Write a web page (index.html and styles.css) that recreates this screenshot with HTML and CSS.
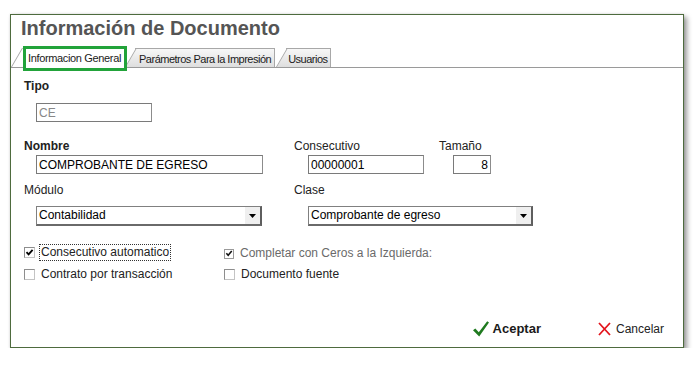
FILE: index.html
```html
<!DOCTYPE html>
<html lang="es">
<head>
<meta charset="utf-8">
<title>Información de Documento</title>
<link rel="stylesheet" href="styles.css">
</head>
<body>
<div class="window">
  <h1 class="title">Información de Documento</h1>
  <div class="tabs">
    <div class="tab active">Informacion General</div>
    <div class="tab t2">Parámetros Para la Impresión</div>
    <div class="tab t3">Usuarios</div>
  </div>
  <div class="content">
    <div class="lbl b">Tipo</div>
    <input class="inp w-tipo dim" type="text" value="CE">

    <div class="row r-nombre">
      <div class="field f1">
        <div class="lbl b">Nombre</div>
        <input class="inp in-top w-nombre" type="text" value="COMPROBANTE DE EGRESO">
      </div>
      <div class="field f2">
        <div class="lbl">Consecutivo</div>
        <input class="inp in-top w-cons" type="text" value="00000001">
      </div>
      <div class="field f3">
        <div class="lbl">Tamaño</div>
        <input class="inp in-top w-tam right" type="text" value="8">
      </div>
    </div>

    <div class="row r-modulo">
      <div class="field f1">
        <div class="lbl">Módulo</div>
        <div class="sel w-mod"><span class="sel-text">Contabilidad</span><span class="sel-btn"><svg width="7" height="4" viewBox="0 0 7 4"><path d="M0 0H7L3.5 4Z" fill="#000"/></svg></span></div>
      </div>
      <div class="field f2">
        <div class="lbl">Clase</div>
        <div class="sel w-clase"><span class="sel-text">Comprobante de egreso</span><span class="sel-btn"><svg width="7" height="4" viewBox="0 0 7 4"><path d="M0 0H7L3.5 4Z" fill="#000"/></svg></span></div>
      </div>
    </div>

    <div class="chk-row first">
      <div class="chk">
        <span class="box"><svg width="9" height="9" viewBox="0 0 9 9"><path d="M1.5 4.2L3.6 6.4L7.6 1.8" fill="none" stroke="#000" stroke-width="1.8"/></svg></span>
        <span class="chk-lbl focus">Consecutivo automatico</span>
      </div>
      <div class="chk">
        <span class="box sm"><svg width="9" height="9" viewBox="0 0 9 9"><path d="M1.5 4.2L3.6 6.4L7.6 1.8" fill="none" stroke="#111" stroke-width="1.8"/></svg></span>
        <span class="chk-lbl gray">Completar con Ceros a la Izquierda:</span>
      </div>
    </div>
    <div class="chk-row">
      <div class="chk">
        <span class="box"></span>
        <span class="chk-lbl">Contrato por transacción</span>
      </div>
      <div class="chk">
        <span class="box"></span>
        <span class="chk-lbl">Documento fuente</span>
      </div>
    </div>

    <div class="actions">
      <div class="btn ok">
        <svg width="16" height="16" viewBox="0 0 16 16"><path d="M0 9.2L2.3 7.4L5.8 11.3L14.2 0.3L16 1.6L6.2 15.6Z" fill="#1f7a1f"/></svg>
        <span>Aceptar</span>
      </div>
      <div class="btn cancel">
        <svg width="13" height="14" viewBox="0 0 13 14"><path d="M1 1L12 13M12 1L1 13" fill="none" stroke="#e3141c" stroke-width="1.8"/></svg>
        <span>Cancelar</span>
      </div>
    </div>
  </div>
</div>
</body>
</html>
```
FILE: styles.css
```css
html, body {
  margin: 0;
  padding: 0;
  background: #fff;
  font-family: "Liberation Sans", Arial, sans-serif;
  color: #222;
}

.window {
  margin: 14px 0 0 10px;
  width: 672px;
  height: 332px;
  border: 1px solid #4e6b3e;
  background: #fff;
  box-shadow: 3px 3px 5px rgba(0, 0, 0, 0.4), 0 0 2px rgba(0, 0, 0, 0.12);
}

.title {
  margin: 0;
  padding: 2px 0 0 10px;
  font: bold 20px/23px "Liberation Sans", Arial, sans-serif;
  color: #555;
}

/* ---------- tabs ---------- */
.tabs {
  display: flex;
  align-items: flex-end;
  margin-top: 6px;
  border-bottom: 1px solid #9a9a9a;
}

.tab {
  position: relative;
  z-index: 0;
  height: 18px;
  padding: 0 3px 0 4px;
  margin-left: 9px;
  font: 11px/20px "Liberation Sans", Arial, sans-serif;
  letter-spacing: -0.5px;
  color: #1a1a1a;
  white-space: nowrap;
  border-top: 1px solid #a8a8a8;
  border-right: 1px solid #a8a8a8;
  background: linear-gradient(#f7f7f7, #dedede);
}

.tab::before {
  content: "";
  position: absolute;
  z-index: -1;
  left: -10px;
  top: -1px;
  bottom: 0;
  width: 16px;
  background: inherit;
  border-top: 1px solid #a8a8a8;
  border-left: 1px solid #a8a8a8;
  transform: skewX(-30deg);
  transform-origin: 0 100%;
}

.tab.active {
  z-index: 1;
  height: 19px;
  margin-left: 12px;
  margin-bottom: -4px;
  padding: 0 3px 0 2px;
  line-height: 19px;
  letter-spacing: -0.35px;
  border: 3px solid #22a33a;
  background: #fff;
}

.tab.active::before {
  left: -15px;
  top: -1px;
  bottom: 1px;
  width: 4px;
  background: transparent;
  border-top: none;
}

.tab.t2 {
  margin-left: 8px;
}

.tab.t3 {
  margin-left: 11px;
  padding: 0 2px 0 2px;
}

/* ---------- form ---------- */
.content {
  padding: 11px 0 0 13px;
}

.lbl {
  font-size: 12px;
  line-height: 14px;
  color: #222;
}

.b {
  font-weight: bold;
}

.inp {
  display: block;
  box-sizing: border-box;
  height: 19px;
  margin: 10px 0 0 12px;
  padding: 0 2px;
  border: 1px solid #7a7a7a;
  border-right-color: #8c8c8c;
  font: 12px "Liberation Sans", Arial, sans-serif;
  color: #000;
  background: #fff;
  outline: none;
}

.inp.in-top {
  margin-top: 2px;
}

.dim {
  color: #888;
}

.right {
  text-align: right;
}

.w-tipo { width: 116px; }
.w-nombre { width: 227px; }
.w-cons { width: 116px; margin-left: 14px; }
.w-tam { width: 38px; margin-left: 14px; }

.row {
  display: flex;
}

.r-nombre {
  margin-top: 17px;
}

.r-modulo {
  margin-top: 9px;
}

.f1 { width: 270px; }
.f2 { width: 145px; }

.sel {
  display: flex;
  box-sizing: border-box;
  height: 20px;
  margin: 9px 0 0 12px;
  border: 1px solid #808080;
  border-right: 2px solid #5e5e5e;
  border-bottom: 2px solid #6a6a6a;
  background: #fff;
  font-size: 12px;
}

.w-mod { width: 226px; }
.f2 .sel { margin-left: 14px; }
.w-clase { width: 225px; }

.sel-text {
  flex: 1;
  padding-left: 2px;
  line-height: 17px;
  color: #000;
}

.sel-btn {
  display: flex;
  align-items: center;
  justify-content: center;
  width: 15px;
  background: #efefef;
}

/* ---------- checkboxes ---------- */
.chk-row {
  display: flex;
  margin-top: 4px;
}

.chk-row.first {
  margin-top: 17px;
}

.chk {
  display: flex;
  align-items: center;
  width: 200px;
}

.box {
  display: flex;
  align-items: center;
  justify-content: center;
  box-sizing: border-box;
  width: 11px;
  height: 11px;
  border: 1px solid #8e8e8e;
  border-right-color: #c4c4c4;
  border-bottom-color: #c4c4c4;
  background: #fff;
}

.box.sm {
  width: 10px;
  height: 10px;
  margin-top: 2px;
  border-color: #9a9a9a;
}

.chk-lbl {
  margin-left: 4px;
  padding: 0 1px;
  border: 1px solid transparent;
  font-size: 12px;
  line-height: 15px;
  color: #222;
  white-space: nowrap;
}

.chk-lbl.focus {
  border: 1px dotted #333;
}

.chk-lbl.gray {
  color: #6a6a6a;
  margin-top: 2px;
}

/* ---------- buttons ---------- */
.actions {
  display: flex;
  justify-content: flex-end;
  align-items: center;
  margin-top: 38px;
  padding-right: 19px;
}

.btn {
  display: flex;
  align-items: center;
  line-height: 16px;
  color: #222;
}

.btn svg {
  display: block;
}

.btn.ok {
  gap: 4px;
  font-size: 13px;
  font-weight: bold;
  color: #1a1a1a;
}

.btn.cancel {
  gap: 5px;
  margin-left: 57px;
  font-size: 12px;
}
```
